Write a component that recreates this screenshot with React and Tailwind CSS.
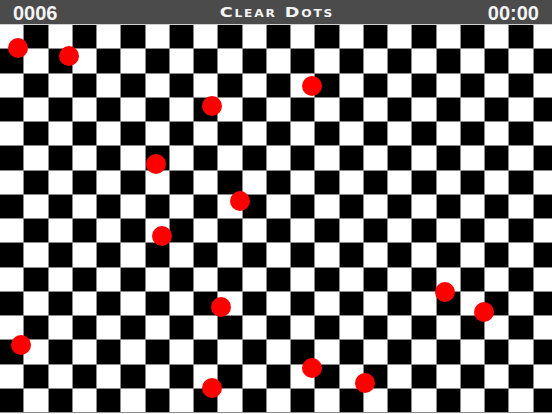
import React from 'react';

const COLS = 23;
const ROWS = 16;

// dot centres, page coordinates
const dots = [
  [18, 48], [69, 56], [312, 86], [212, 106], [156, 164], [240, 201],
  [162, 236], [445, 292], [221, 307], [484, 312], [21, 345], [312, 368],
  [365, 383], [212, 388],
];

function Board() {
  const cells = [];
  for (let r = 0; r < ROWS; r++) {
    for (let c = 0; c < COLS; c++) {
      const dark = (r + c) % 2 === 1;
      cells.push(
        <div
          key={r + '-' + c}
          className={`border-r border-b border-[#8c8c8c] ${dark ? 'bg-black' : 'bg-white'}`}
        />
      );
    }
  }
  return (
    <div className="grid grid-cols-[repeat(23,24.26px)] auto-rows-[24.26px]">
      {cells}
    </div>
  );
}

export default function App() {
  return (
    <div className="relative w-[552px] h-[414px] overflow-hidden bg-white">
      {/* Top bar */}
      <div className="h-[25px] bg-[#4b4b4b] border-b border-[#cfcfcf] flex items-center justify-between px-[13px] text-[#f4f4f4]">
        <span className="w-[60px] font-['Liberation_Sans',Arial,sans-serif] font-bold text-[20px] leading-none pt-[1px]">0006</span>
        <span className="font-['DejaVu_Sans',sans-serif] font-bold text-[14.5px] leading-none tracking-[1.5px] mr-[-1.5px] scale-x-[1.22] [font-variant:small-caps]">Clear Dots</span>
        <span className="w-[60px] text-right font-['Liberation_Sans',Arial,sans-serif] font-bold text-[20px] leading-none pt-[1px]">00:00</span>
      </div>

      <Board />

      {/* Dots */}
      {dots.map(([x, y], i) => (
        <div
          key={i}
          className="absolute w-[20px] h-[20px] rounded-full bg-[#ff0000]"
          style={{ left: x - 10, top: y - 10 }}
        />
      ))}
    </div>
  );
}
